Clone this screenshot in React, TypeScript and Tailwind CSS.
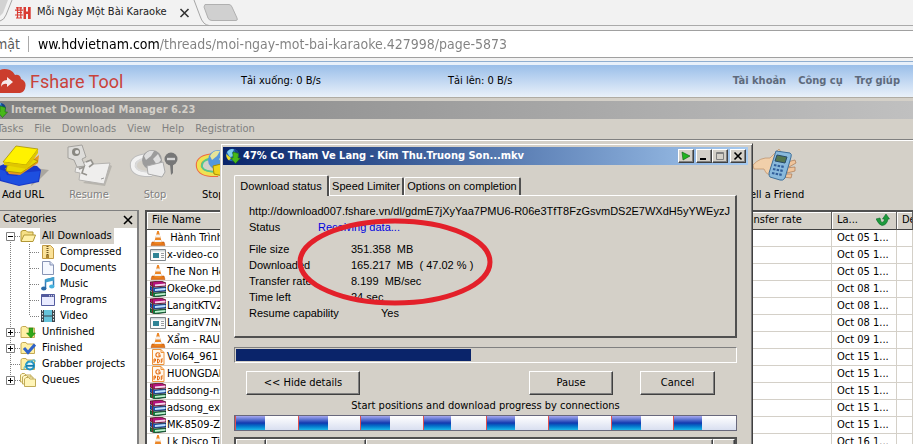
import type { ReactNode } from "react";

const ui = "font-['DejaVu_Sans_Condensed','DejaVu_Sans',sans-serif]";

/* ---------- icons ---------- */

function Globe({ className }: { className?: string }) {
  return (
    <svg viewBox="0 0 16 16" className={className} aria-hidden="true">
      <circle cx="7.5" cy="7" r="6.3" fill="#2467b8" />
      <path d="M2 4 Q5 0 9 1.5 L7 5 L9 8 L5 9 L3 6Z" fill="#7fd0ee" />
      <path d="M9 1.2 Q14 2.5 13.8 7 L11 6Z" fill="#174086" />
      <path d="M8 4 L13.5 5.5 L13 10 L15.5 10 L10.5 15.5 L5.5 10 L8 10Z" fill="#48b819" stroke="#176b10" strokeWidth=".6" />
      <path d="M1.2 6 Q1 10 4 12.5 L6 10Z" fill="#eedc23" />
    </svg>
  );
}

function Cloud() {
  return (
    <svg viewBox="0 0 26 24" className="h-6 w-[26px] shrink-0" aria-hidden="true">
      <path d="M0 1 Q4-1 10 1 Q14 3 15 6 Q20 5 21 10 Q26 12 25.500 17 Q25 23 20 24 H0Z" fill="#cb3d2d" />
      <path d="M1 18 Q1 11 7 11 V8 L13 13 L7 18 V15 Q3 14 1 18Z" fill="#f6e9ea" />
    </svg>
  );
}

function AddUrlIcon() {
  return (
    <svg viewBox="0 0 52 42" className="h-[42px] w-[52px]" aria-hidden="true">
      <path d="M38 24 L52 26 L42 36 L34 42Z" fill="#aaa69f" />
      <path d="M0 23 L12 18 L40 22 L44 26 L42 38 L22 42 L3 37Z" fill="#1838c8" />
      <path d="M1 25 L8 27 L10 31 L20 32 L23 29 L43 27 L41 37 L22 41 L4 36Z" fill="#1d4fe0" />
      <path d="M8 24 L21 27 L42 11 L41 19 L23 31 L12 30Z" fill="#ec971c" />
      <path d="M10 22 L31 13 L41 17 L24 29 L9 27Z" fill="#e9d900" stroke="#9a8800" strokeWidth=".7" />
      <path d="M6 18 L19 2 L41 5 L29 21Z" fill="#fff200" stroke="#aa9200" strokeWidth=".8" />
      <path d="M29 21 L41 5 V9 L30 25 L7 21 V18Z" fill="#e0c600" />
    </svg>
  );
}

function ResumeIcon() {
  return (
    <svg viewBox="0 0 46 42" className="h-[42px] w-[46px]" aria-hidden="true">
      <path d="M17 39 L39 42 L46 22 L42 20Z" fill="#b8b5ae" />
      <path d="M13 20 L25 16 L28 20 L44 19 L38 40 L13 36 L14 29 L9 28 L10 23 L14 24Z" fill="#efeeed" stroke="#b4b2af" />
      <path d="M2 3 L16 1 L20 13 L16 15 L19 22 L11 23 L8 16 L2 14Z" fill="#dddcd9" stroke="#a3a19d" />
      <circle cx="10" cy="8" r="4" fill="#888781" />
      <circle cx="11" cy="8" r="2" fill="#e7e6e4" />
      <path d="M13 25 L18 23 L16 29 L21 31 M20 18 l5-2 2 4-4 3" fill="none" stroke="#96948f" strokeWidth="1.600" />
      <path d="M35 35 l3-1" stroke="#999" />
    </svg>
  );
}

function StopIcon({ color = false }: { color?: boolean }) {
  return (
    <svg viewBox="0 0 52 36" className="h-9 w-[52px]" aria-hidden="true">
      <path d="M20 9 Q2 10 4 20 Q6 28 23 27" fill="none" stroke={color ? "#ee6b42" : "#bdbdbd"} strokeWidth="6" />
      <path d="M20 9 Q2 10 4 20 Q6 28 23 27" fill="none" stroke={color ? "#eee253" : "#f2f2f2"} strokeWidth="4" />
      <path d="M20 11 Q6 12 7 20 Q9 25 23 25" fill="none" stroke={color ? "#55c98b" : "#d9d9d9"} strokeWidth="2" />
      <circle cx="23" cy="13" r="10" fill={color ? "#5697dc" : "#9c9c9c"} />
      <path d="M15 9 Q18 3 25 4 L22 9 L17 13Z M24 12 L29 7 L32 13 L28 18Z" fill={color ? "#e5e49a" : "#dedede"} />
      <path d="M18 19 L34 15 L36 25 L33 30 L19 27Z" fill={color ? "#f1d51c" : "#ececec"} stroke={color ? "#a78b00" : "#aaa"} />
      <path d="M41 17 h3 v9 l-2 2z" fill="#777" />
      <circle cx="42" cy="12" r="6.500" fill={color ? "#d52525" : "#777"} />
      <path d="M38 12h8" stroke="#d5d5d5" strokeWidth="2.400" />
    </svg>
  );
}

function PhoneIcon() {
  return (
    <svg viewBox="0 0 46 34" className="h-[34px] w-[46px]" aria-hidden="true">
      <path d="M1 17 Q8 9 18 10 L27 1 L29 4 L24 12 L26 26 Q15 30 12 21 L2 21Z" fill="#f1cfaa" stroke="#bb8e65" strokeWidth=".7" />
      <path d="M35 14 l8-2 1 3-7 4z M34 20 l9-1 0 4-8 2z M31 26 l9 0-1 4-8-1z" fill="#efc49b" stroke="#a97a54" strokeWidth=".7" />
      <path d="M24 3 L38 5 Q40 6 39 9 L33 30 Q31 33 28 32 L18 29 Q17 28 17 25Z" fill="#89b9dc" stroke="#3f6f99" />
      <path d="M25 7 L35 9 L33 15 L23 13Z" fill="#53764f" stroke="#294b68" />
      <path d="M22 17 l10 2 M21 21 l10 2 M20 25 l10 2" stroke="#315e9a" strokeWidth="2.200" strokeDasharray="2.500 1.200" />
    </svg>
  );
}

type FileKind = "vlc" | "rar" | "app" | "pdf";

function FileIcon({ kind }: { kind: FileKind }) {
  return (
    <svg viewBox="0 0 16 16" className="h-4 w-4 shrink-0" aria-hidden="true">
      {kind === "vlc" && (
        <>
          <path d="M2 12 H14 L15 15.500 H1Z" fill="#e57718" stroke="#b34d08" strokeWidth=".5" />
          <path d="M7.200 1 H8.800 L12 13 Q8 15 4 13Z" fill="#ec8625" />
          <path d="M6.300 4.500 H9.700 L10.500 7.500 H5.500Z M4.800 10 H11.200 L11.700 12 H4.300Z" fill="#f4f1ee" />
        </>
      )}
      {kind === "rar" && (
        <>
          <path d="M0 1 L11 0 L16 2 V5 L5 6 L0 4Z" fill="#b3127c" stroke="#300" strokeWidth=".7" />
          <path d="M5 3.500 L15.500 2.500 V4.500 L5 5.300Z" fill="#f5d7ea" />
          <path d="M0 5.500 L5 7 L16 6 V10 L5 11 L0 9Z" fill="#2355b9" stroke="#001d36" strokeWidth=".7" />
          <path d="M5 8 L15.500 7 V9 L5 10Z" fill="#bde2fc" />
          <path d="M0 10.500 L5 12 L16 11 V14.500 L5 16 L0 14Z" fill="#16803f" stroke="#001d12" strokeWidth=".7" />
          <path d="M5 13 L15.500 12 V13.800 L5 14.800Z" fill="#c2f0d1" />
          <path d="M2.500 1 V15" stroke="#7a2a2a" strokeWidth="1" />
        </>
      )}
      {kind === "app" && (
        <>
          <path d="M.500 2.500 H15.500 V13.500 H.500Z" fill="#fafafa" stroke="#7e8488" />
          <path d="M1 3 H15 V4.500 H1Z" fill="#cfd6d9" />
          <path d="M3 6 H9 V11 H3Z" fill="#2f8395" />
          <path d="M11 6.500h3M11 8.500h3M11 10.500h3" stroke="#9a9ea1" />
        </>
      )}
      {kind === "pdf" && (
        <>
          <path d="M2.500 .500 H11 L14 3.500 V15.500 H2.500Z" fill="#fff8ed" stroke="#ee943b" />
          <path d="M11 .500 V3.500 H14" fill="none" stroke="#ee943b" />
          <path d="M10 4.500 Q7 2.800 6 5 Q5.500 8 8 8 L10 7.500 V6 H8" fill="none" stroke="#e56d13" strokeWidth="1.200" />
          <path d="M4 14v-4h1.500v2H4M7.500 10v4q2 0 2-2t-2-2M13 10h-1.700v4M11.300 12h1.500" fill="none" stroke="#e56d13" />
        </>
      )}
    </svg>
  );
}

type TreeKind = "open" | "zip" | "doc" | "music" | "program" | "video" | "down" | "check" | "ie" | "stack";

function TreeIcon({ kind }: { kind: TreeKind }) {
  const folder = kind === "down" || kind === "check" || kind === "ie";
  return (
    <svg viewBox="0 0 16 14" className="h-[14px] w-4 shrink-0" aria-hidden="true">
      {kind === "open" && (
        <>
          <path d="M1 12 V2.500 L3 1.500 H6 L7.500 3 H13 V6" fill="#f5df86" stroke="#b29735" />
          <path d="M1 12.500 L4 6 H15.500 L13 12.500Z" fill="#fff0a8" stroke="#b29735" />
        </>
      )}
      {kind === "zip" && (
        <>
          <path d="M2.500 .500 H10.500 L13.500 3.500 V13.500 H2.500Z" fill="#fae198" stroke="#c29b44" />
          <path d="M7.500 1 V11" stroke="#6f5720" strokeWidth="2" strokeDasharray="1 1" />
          <path d="M6 10h3v3H6z" fill="#aa8430" />
        </>
      )}
      {kind === "doc" && (
        <>
          <path d="M2.500 .500 H10 L13.500 4 V13.500 H2.500Z" fill="#f5f8ff" stroke="#8894b5" />
          <path d="M10 .500 V4 H13.500" fill="#d5def2" stroke="#8894b5" />
        </>
      )}
      {kind === "music" && (
        <>
          <path d="M5.500 11 V3 L13.500 1 V9" fill="none" stroke="#347cb8" strokeWidth="1.500" />
          <path d="M5.500 2 L14 0 V3.500 L5.500 5.500Z" fill="#3fa1cf" />
          <ellipse cx="3.800" cy="11.500" rx="2.700" ry="2" fill="#286aa8" />
          <ellipse cx="11.800" cy="9.500" rx="2.700" ry="2" fill="#47b3df" />
        </>
      )}
      {kind === "program" && (
        <>
          <path d="M1.500 1.500 H14.500 V12.500 H1.500Z" fill="#e9ebff" stroke="#545c9f" />
          <path d="M1.500 1.500 H14.500 V4 H1.500Z" fill="#535a9c" />
          <path d="M9 2.800h1M11 2.800h1M13 2.800h1" stroke="#fff" />
        </>
      )}
      {kind === "video" && (
        <>
          <path d="M1 1 H15 V13 H1Z" fill="#3d474e" />
          <path d="M4 1 H12 V6.500 H4Z M4 7.500 H12 V13 H4Z" fill="#65c3da" />
          <path d="M2.500 1 V13 M13.500 1 V13" stroke="#eee" strokeDasharray="1.500 1.500" />
        </>
      )}
      {folder && <path d="M1 12.500 V2.500 L2.500 1.500 H6 L7 3 H14.500 V12.500Z" fill="#fff0a5" stroke="#c4a954" />}
      {kind === "down" && <path d="M9 3h4v5h2.500L11 13 6.500 8H9z" fill="#32a719" stroke="#188014" strokeWidth=".5" />}
      {kind === "check" && <path d="M4 7 L8 11.500 L15 3.500" fill="none" stroke="#2f62c9" strokeWidth="3" />}
      {kind === "ie" && (
        <>
          <circle cx="10" cy="8.500" r="4" fill="#e6f7fc" stroke="#2093c4" strokeWidth="2.200" />
          <path d="M6 8.800h8" stroke="#167aa9" strokeWidth="1.800" />
          <path d="M4 13 Q3 8 13 3 Q16 2 15 5" fill="none" stroke="#47b6d9" />
        </>
      )}
      {kind === "stack" && (
        <>
          <path d="M.500 9 V2 L2 .500 H4.500 L6 2 H11 V9Z" fill="#fff7c9" stroke="#c1ab57" />
          <path d="M2.500 11 V4 L4 2.500 H6.500 L8 4 H13 V11Z" fill="#fff7c9" stroke="#c1ab57" />
          <path d="M4.500 13.500 V6 L6 4.500 H8.500 L10 6 H15.500 V13.500Z" fill="#fff5b8" stroke="#c1ab57" />
        </>
      )}
    </svg>
  );
}

/* ---------- browser ---------- */

function BrowserBar() {
  return (
    <header className={`${ui} shrink-0 bg-[#f2f2f2]`}>
      <div className="flex h-[26px] items-center border-b border-[#aaaaaa]">
        <svg viewBox="0 0 15 26" className="h-[26px] w-[15px] shrink-0" aria-hidden="true">
          <path d="M0 0 H8 L3 13 L0 16Z" fill="#d2d2d2" />
          <path d="M12 0 L6 15 Q4 20 0 21" fill="none" stroke="#a5a5a5" />
        </svg>
        <svg viewBox="0 0 16 14" className="h-[14px] w-4 shrink-0" aria-hidden="true">
          <path d="M8.500 1h2.500v4.500h2V1h2.700v12H13V8h-2v5H8.500z" fill="#d93a32" />
          <path d="M1 1.800h6M0 4.200h8M2 6.500h5M0 9h8M1 12h6M2.500 1v11M5.800 1v11" stroke="#d93a32" strokeWidth="1.200" />
        </svg>
        <span className="ml-[6px] w-[134px] overflow-hidden text-[11px] whitespace-nowrap text-[#202020]">Mỗi Ngày Một Bài Karaoke</span>
        <button aria-label="Close tab" className="ml-2 h-4 w-3">
          <svg viewBox="0 0 12 12" className="h-3 w-3"><path d="M1.500 2 L9.500 10 M9.500 2 L1.500 10" stroke="#333" strokeWidth="1.600" /></svg>
        </button>
        <button aria-label="New tab" className="h-[26px] w-[56px]">
          <svg viewBox="0 0 56 26" className="h-[26px] w-[56px]">
            <path d="M3 0 L9 16 Q12 25 18 25.500" fill="none" stroke="#a5a5a5" />
            <path d="M14 4.500 H38 Q40 4.500 41 7 L46 18 Q47 20.500 45 20.500 H21 Q18 20.500 17 18 L13 7Z" fill="#d0d0d0" stroke="#b0b0b0" />
          </svg>
        </button>
      </div>
      <div className="h-[35px] py-1">
        <div className="flex h-7 items-center border-y border-[#a0a0a0] bg-white text-[14px]">
          <span className="-ml-[9px] w-[29px] shrink-0 text-right text-[#5a5a5a]">mật</span>
          <span className="mr-[9px] ml-2 h-4 w-px shrink-0 bg-[#aaaaaa]" />
          <input
            aria-label="Address"
            defaultValue="ww.hdvietnam.com/threads/moi-ngay-mot-bai-karaoke.427998/page-5873"
            className="h-6 min-w-0 flex-1 bg-linear-to-r from-black from-[121px] to-[#808080] to-[121px] bg-clip-text text-transparent outline-none"
          />
        </div>
      </div>
    </header>
  );
}

function FshareBar() {
  return (
    <section className={`${ui} flex h-9 shrink-0 items-center border-t border-[#8faed0] bg-linear-to-b from-[#e8f0fa] from-[8%] via-[#9bbfe9] via-[10%] to-[#eaf1fa] pt-[3px] text-[11px]`}>
      <Cloud />
      <span className="ml-1 w-[211px] shrink-0 font-[Roboto,sans-serif] text-[18px] text-[#c9423a]">Fshare Tool</span>
      <span className="w-[207px] shrink-0 text-black">Tải xuống: 0 B/s</span>
      <span className="text-black">Tải lên: 0 B/s</span>
      <nav className="mr-[13px] ml-auto flex gap-3 font-bold text-[#5e6a7c]">
        <a href="#account">Tài khoản</a>
        <a href="#tools">Công cụ</a>
        <a href="#help">Trợ giúp</a>
      </nav>
    </section>
  );
}

/* ---------- manager window ---------- */

function ToolItem({ icon, label, disabled = false }: { icon: ReactNode; label: string; disabled?: boolean }) {
  return (
    <button
      disabled={disabled}
      className="flex w-[66px] shrink-0 flex-col items-center text-black disabled:text-[#808080] disabled:[text-shadow:1px_1px_0_#fff]"
    >
      <span className="flex h-[44px] items-center">{icon}</span>
      <span className="leading-4 whitespace-nowrap">{label}</span>
    </button>
  );
}

type Node = { label: string; icon: TreeKind; child?: boolean; toggle?: "+" | "-"; last?: boolean };

const nodes: Node[] = [
  { label: "All Downloads", icon: "open", toggle: "-" },
  { label: "Compressed", icon: "zip", child: true },
  { label: "Documents", icon: "doc", child: true },
  { label: "Music", icon: "music", child: true },
  { label: "Programs", icon: "program", child: true },
  { label: "Video", icon: "video", child: true, last: true },
  { label: "Unfinished", icon: "down", toggle: "+" },
  { label: "Finished", icon: "check", toggle: "+" },
  { label: "Grabber projects", icon: "ie" },
  { label: "Queues", icon: "stack", toggle: "+", last: true },
];

function Branch({ node }: { node: Node }) {
  const end = node.last ? 8 : 16;
  const dots = { stroke: "#808080", strokeDasharray: "1 1" };
  return (
    <svg viewBox={node.child ? "0 0 40 16" : "0 0 20 16"} className={node.child ? "h-4 w-10 shrink-0" : "h-4 w-5 shrink-0"} aria-hidden="true">
      {node.child ? (
        <>
          <path d="M10.500 0V16" {...dots} />
          <path d={`M29.500 0V${end}M30 8.500H40`} {...dots} />
        </>
      ) : (
        <path d={`M10.500 ${node.toggle === "-" ? 8 : 0}V${end}M11 8.500H20`} fill="none" {...dots} />
      )}
      {node.toggle && (
        <>
          <path d="M6.500 4.500h8v8h-8z" fill="#fff" stroke="#808080" />
          <path d={node.toggle === "+" ? "M8 8.500h5M10.500 6v5" : "M8 8.500h5"} stroke="#000" />
        </>
      )}
    </svg>
  );
}

function Categories() {
  return (
    <aside className="flex w-[139px] shrink-0 flex-col border-t border-r-2 border-t-[#808080] border-r-[#808080] bg-white">
      <div className="flex h-[17px] shrink-0 items-center justify-between bg-[#d4d0c8] pr-1 pl-[3px]">
        <h2>Categories</h2>
        <button aria-label="Close categories">
          <svg viewBox="0 0 10 10" className="h-[10px] w-[10px]"><path d="M1 1 L9 9 M9 1 L1 9" stroke="#000" strokeWidth="1.600" /></svg>
        </button>
      </div>
      <ul>
        {nodes.map((node) => (
          <li key={node.label} className="flex h-4 items-center whitespace-nowrap">
            <Branch node={node} />
            <TreeIcon kind={node.icon} />
            <span className={node.toggle === "-" ? "ml-1 bg-[#d4d0c8] px-[2px] leading-4" : node.child ? "ml-1 leading-4" : "ml-1 px-[2px] leading-4"}>
              {node.label}
            </span>
          </li>
        ))}
      </ul>
    </aside>
  );
}

const files: { name: string; kind: FileKind; date: string }[] = [
  { name: " Hành Trình", kind: "vlc", date: "Oct 05 1..." },
  { name: "x-video-co", kind: "app", date: "Oct 05 1..." },
  { name: "The Non He", kind: "vlc", date: "Oct 05 1..." },
  { name: "OkeOke.pd", kind: "rar", date: "Oct 08 1..." },
  { name: "LangitKTV2", kind: "rar", date: "Oct 08 1..." },
  { name: "LangitV7Ne", kind: "app", date: "Oct 08 1..." },
  { name: "Xẩm - RAU", kind: "vlc", date: "Oct 09 1..." },
  { name: "Vol64_961", kind: "pdf", date: "Oct 15 1..." },
  { name: "HUONGDAN", kind: "pdf", date: "Oct 15 1..." },
  { name: "addsong-n", kind: "rar", date: "Oct 15 1..." },
  { name: "adsong_ex", kind: "rar", date: "Oct 15 1..." },
  { name: "MK-8509-Z", kind: "rar", date: "Oct 15 1..." },
  { name: "Lk Disco Tin", kind: "vlc", date: "Oct 16 1..." },
];

function FileTable() {
  const head = "h-[17px] border-r border-b border-r-[#606060] border-b-[#404040] p-0 pl-[5px] text-left font-normal whitespace-nowrap shadow-[inset_1px_1px_0_#fff]";
  const cell = "h-[17px] border-r border-b border-[#d4d0c8] p-0 pl-[5px] leading-4 whitespace-nowrap";
  return (
    <div className="min-w-0 flex-1 overflow-hidden border-t-2 border-l-2 border-[#505050] bg-white">
      <table className="w-full table-fixed border-separate border-spacing-0">
        <colgroup>
          <col />
          <col className="w-[100px]" />
          <col className="w-[65px]" />
          <col className="w-4" />
        </colgroup>
        <thead className="bg-[#d4d0c8]">
          <tr>
            <th className={head}>File Name</th>
            <th className={`${head} pl-[7px]`}>Transfer rate</th>
            <th className={head}>
              <span className="flex items-center justify-between pr-[6px]">
                La...
                <svg viewBox="0 0 14 12" className="h-3 w-[14px]" aria-hidden="true">
                  <path d="M0 5 L4 4 L5 8 Q8 9 8.500 5 H6.500 L10 0 L13.500 5 H12 Q11 11 6 11.500 Q3 11 0 5Z" fill="#1d9a3c" stroke="#0c6b28" strokeWidth=".6" />
                </svg>
              </span>
            </th>
            <th className={`${head} overflow-hidden`}>De</th>
          </tr>
        </thead>
        <tbody>
          {files.map((file) => (
            <tr key={file.name}>
              <td className="h-[17px] border-r border-b border-[#d4d0c8] p-0 pl-[3px] leading-4 whitespace-pre">
                <span className="flex h-4 items-center gap-px">
                  <FileIcon kind={file.kind} />
                  {file.name}
                </span>
              </td>
              <td className={cell} />
              <td className={cell}>{file.date}</td>
              <td className={cell} />
            </tr>
          ))}
        </tbody>
      </table>
    </div>
  );
}

function ManagerWindow() {
  return (
    <main className={`${ui} flex min-h-0 flex-1 flex-col border-t border-[#b0aca4] bg-[#d4d0c8] pt-[3px] text-[11px] text-black`}>
      <div className="flex h-[18px] shrink-0 items-center bg-linear-to-r from-[#808080] to-[#c0c0c0]">
        <Globe className="-ml-2 h-4 w-4 shrink-0" />
        <h1 className="ml-[3px] font-bold text-[#d4d0c8]">Internet Download Manager 6.23</h1>
      </div>
      <nav className="-ml-[3px] flex h-[21px] shrink-0 items-center gap-[11px] border-b border-[#808080] text-[#808080]">
        <button>Tasks</button>
        <button>File</button>
        <button>Downloads</button>
        <button>View</button>
        <button>Help</button>
        <button>Registration</button>
      </nav>
      <div className="-ml-[10px] flex h-[70px] shrink-0 border-t border-white pt-[2px]">
        <ToolItem icon={<AddUrlIcon />} label="Add URL" />
        <ToolItem icon={<ResumeIcon />} label="Resume" disabled />
        <ToolItem icon={<StopIcon />} label="Stop" disabled />
        <ToolItem icon={<StopIcon color />} label="Stop All" />
        <span className="w-[488px] shrink-0" />
        <ToolItem icon={<PhoneIcon />} label="Tell a Friend" />
      </div>
      <div className="flex min-h-0 flex-1 gap-[6px]">
        <Categories />
        <FileTable />
      </div>
    </main>
  );
}

/* ---------- download dialog ---------- */

const bevel = "border border-t-white border-l-white border-r-[#404040] border-b-[#404040] bg-[#d4d0c8] shadow-[inset_-1px_-1px_0_#808080]";

function Detail({ label, value, labelWidth = "w-[102px]", tone = "text-black" }: { label: string; value: string; labelWidth?: string; tone?: string }) {
  return (
    <div className="flex h-4 items-center">
      <dt className={`${labelWidth} shrink-0`}>{label}</dt>
      <dd className={`whitespace-pre ${tone}`}>{value}</dd>
    </div>
  );
}

function CaptionButton({ label, children }: { label: string; children: ReactNode }) {
  return (
    <button aria-label={label} className={`${bevel} flex h-[14px] w-4 items-center justify-center`}>
      <svg viewBox="0 0 12 10" className="h-[10px] w-3">{children}</svg>
    </button>
  );
}

function DownloadDialog() {
  const percent = 47.02;
  const tab = "rounded-t-[2px] border-t border-l border-r-2 border-t-white border-l-white border-r-[#505050] bg-[#d4d0c8] whitespace-nowrap";
  return (
    <div
      role="dialog"
      aria-label="Download progress"
      className="absolute top-[143px] left-[220px] h-[320px] w-[533px] border border-t-[#d4d0c8] border-r-[#404040] border-l-[#d4d0c8] bg-[#d4d0c8] font-['Liberation_Sans',Arial,sans-serif] text-[11px] text-black shadow-[inset_1px_1px_0_#fff,inset_-1px_0_0_#808080]"
    >
      <div className={`${ui} mt-[3px] mr-1 ml-[2px] flex h-[18px] items-center bg-linear-to-r from-[#0a246a] to-[#a6caf0] pr-[2px] pl-[2px] text-[11px]`}>
        <Globe className="h-4 w-4 shrink-0" />
        <h2 className="ml-[2px] flex-1 font-bold whitespace-nowrap text-white">47% Co Tham Ve Lang - Kim Thu.Truong Son...mkv</h2>
        <div className="flex">
          <CaptionButton label="Run"><path d="M2 1 L10 5 L3 9Z" fill="#20b520" stroke="#075a0c" strokeWidth=".6" /></CaptionButton>
          <span className="w-[2px]" />
          <CaptionButton label="Minimize"><path d="M2 8h6" stroke="#000" strokeWidth="2" /></CaptionButton>
          <CaptionButton label="Maximize"><path d="M2.500 1.500h7v7h-7zM2.500 2.500h7" fill="none" stroke="#808080" /></CaptionButton>
          <span className="w-[2px]" />
          <CaptionButton label="Close"><path d="M2.500 1.500l7 7M9.500 1.500l-7 7" stroke="#000" strokeWidth="1.600" /></CaptionButton>
        </div>
      </div>

      <div className="mt-[9px] mr-[15px] ml-[13px]">
        <div role="tablist" className="flex h-[21px] items-end">
          <button role="tab" aria-selected="true" className={`${tab} z-10 -mb-px h-[21px] w-[95px]`}>Download status</button>
          <button role="tab" aria-selected="false" className={`${tab} h-[18px] w-[75px]`}>Speed Limiter</button>
          <button role="tab" aria-selected="false" className={`${tab} h-[18px] w-[117px]`}>Options on completion</button>
        </div>
        <section className="h-[143px] border-t border-r-2 border-b-2 border-l border-t-white border-r-[#505050] border-b-[#505050] border-l-white pt-[7px] pl-[14px]">
          <p className="h-4 leading-4 whitespace-nowrap">http://download007.fshare.vn/dl/gdmE7jXyYaa7PMU6-R06e3TfT8FzGsvmDS2E7WXdH5yYWEyzJ</p>
          <dl>
            <Detail label="Status" value="Receiving data..." labelWidth="w-[69px]" tone="text-[#0000e0]" />
            <div className="h-[6px]" />
            <Detail label="File size" value="351.358  MB" />
            <Detail label="Downloaded" value="165.217  MB  ( 47.02 % )" />
            <Detail label="Transfer rate" value="8.199  MB/sec" />
            <Detail label="Time left" value="24 sec" />
            <Detail label="Resume capability" value="Yes" labelWidth="w-[132px]" />
          </dl>
        </section>

        <div role="progressbar" aria-valuenow={percent} className="mt-[9px] h-4 border border-t-[#808080] border-r-white border-b-white border-l-[#808080] p-px">
          <div className="h-full bg-[#0a246a]" style={{ width: `${percent}%` }} />
        </div>

        <div className={`${ui} mt-2 flex pl-3 text-[11px]`}>
          <button className={`${bevel} h-6 w-[114px]`}>&lt;&lt; Hide details</button>
          <button className={`${bevel} mr-[27px] ml-auto h-6 w-[84px]`}>Pause</button>
          <button className={`${bevel} mr-[22px] h-6 w-[75px]`}>Cancel</button>
        </div>

        <p className={`${ui} mt-[2px] h-[18px] text-center text-[11px] leading-[18px]`}>Start positions and download progress by connections</p>
        <div className="flex h-4 border border-[#68687c] bg-linear-to-b from-white to-[#d9dff0]">
          {[30, 30, 30, 28, 29, 30, 30, 29].map((width, i) => (
            <div key={i} className="flex-1">
              <div
                className="h-full border-l border-[#e05050] bg-linear-to-b from-[#a8a8f0] via-[#1238b0] via-50% to-[#20b8e8] bg-origin-border"
                style={{ width }}
              />
            </div>
          ))}
        </div>

        <div className="mt-[6px] flex h-6 border-2 border-[#505050]">
          <span className={`${bevel} w-[30px]`} />
          <span className={`${bevel} w-[100px] pt-[2px] pl-6`}>Downloaded</span>
          <span className={`${bevel} flex-1 pt-[2px] pl-4`}>Info</span>
          <span className={`${bevel} w-[22px]`} />
        </div>
      </div>
    </div>
  );
}

export default function App() {
  return (
    <div className="relative flex h-screen flex-col overflow-hidden">
      <BrowserBar />
      <FshareBar />
      <ManagerWindow />
      <DownloadDialog />
      <svg viewBox="0 0 200 92" className="pointer-events-none absolute top-[216px] left-[295px] h-[92px] w-[200px]" aria-hidden="true">
        <ellipse cx="100" cy="46" rx="95" ry="41" fill="none" stroke="#e3202a" strokeWidth="5" />
      </svg>
    </div>
  );
}
